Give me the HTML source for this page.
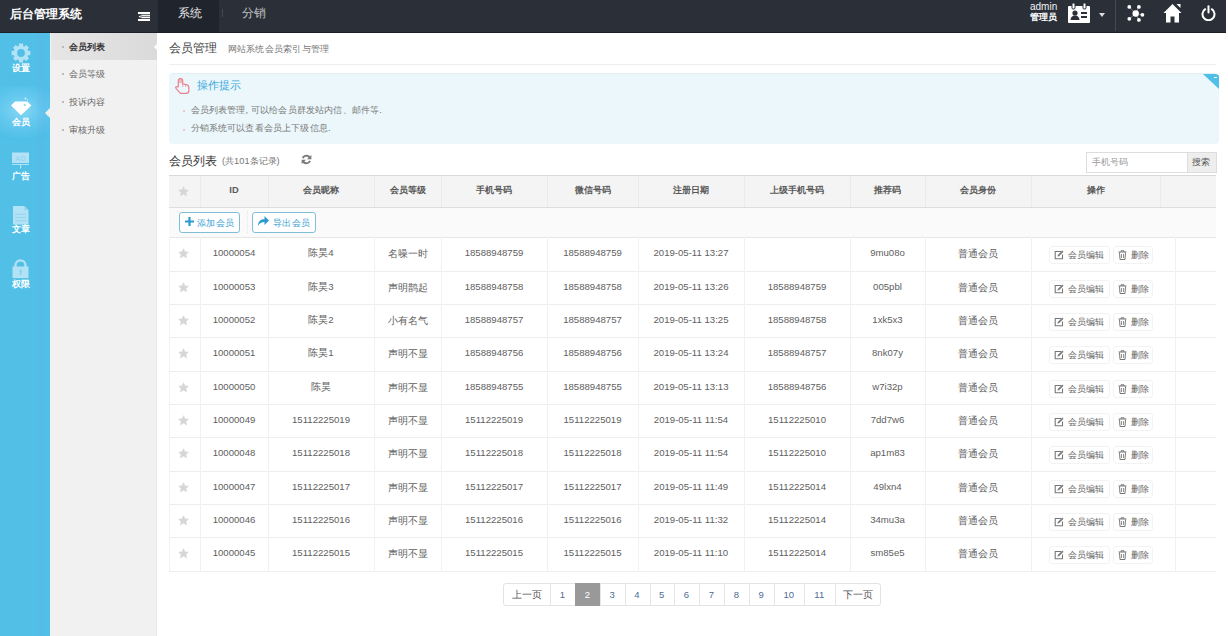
<!DOCTYPE html><html><head><meta charset="utf-8"><title>会员管理</title><style>
*{box-sizing:border-box}
html,body{margin:0;padding:0}
body{width:1228px;height:636px;overflow:hidden;background:#fff;position:relative;font-family:"Liberation Sans",sans-serif;color:#555}
.a{position:absolute}
.hdr{left:0;top:0;width:1226px;height:33px;background:#2b3038;border-bottom:1px solid #1c2027}
.side{left:0;top:33px;width:50px;height:603px;background:#52bfe7}
.sub{left:50px;top:33px;width:107px;height:603px;background:#f1f1f1}
.t{white-space:nowrap;line-height:1}
.cell{position:absolute;display:flex;align-items:center;justify-content:center;white-space:nowrap;line-height:12px}
</style></head><body>
<div class="a hdr"></div>
<div class="a t" style="left:10px;top:8px;font-size:12.2px;font-weight:bold;color:#fff">后台管理系统</div>
<svg class="a" style="left:138px;top:12px" width="12" height="9" viewBox="0 0 12 9"><rect x="0" y="0" width="12" height="9" fill="#fff"/><rect x="0" y="2.3" width="12" height="0.8" fill="#2b3038"/><rect x="0" y="6" width="12" height="0.8" fill="#2b3038"/><rect x="3.5" y="4.2" width="8.5" height="0.6" fill="#2b3038"/><rect x="0" y="2.3" width="3.3" height="4.5" fill="#2b3038"/><path d="M2.6 3.2v2.8L0.6 4.6z" fill="#fff"/></svg>
<div class="a" style="left:158px;top:0;width:61px;height:32px;background:#20252d"></div>
<div class="a t" style="left:178px;top:8px;font-size:11.5px;color:#e6e6e6">系统</div>
<div class="a" style="left:222px;top:9px;width:1px;height:8px;background:#444a53"></div>
<div class="a t" style="left:242px;top:8px;font-size:11.5px;color:#c0c0c0">分销</div>
<div class="a t" style="left:1030px;top:2px;font-size:10px;color:#f2f2f2">admin</div>
<div class="a t" style="left:1030px;top:13px;font-size:9px;font-weight:bold;color:#fff">管理员</div>
<svg class="a" style="left:1068px;top:3px" width="22" height="20" viewBox="0 0 22 20"><rect x="0" y="3" width="22" height="17" rx="1" fill="#fff"/><rect x="4" y="0" width="3" height="6" rx="1" fill="#fff" stroke="#2b3038" stroke-width="1"/><rect x="15" y="0" width="3" height="6" rx="1" fill="#fff" stroke="#2b3038" stroke-width="1"/><circle cx="7" cy="10" r="2.6" fill="#2b3038"/><path d="M2.5 17c0-3 2-4.5 4.5-4.5s4.5 1.5 4.5 4.5z" fill="#2b3038"/><rect x="13" y="9" width="6" height="2" fill="#2b3038"/><rect x="13" y="13" width="6" height="2" fill="#2b3038"/></svg>
<svg class="a" style="left:1099px;top:13px" width="6" height="4" viewBox="0 0 6 4"><path d="M0 0h6L3 4z" fill="#ddd"/></svg>
<div class="a" style="left:1115px;top:0;width:1px;height:31px;background:#444a53"></div>
<svg class="a" style="left:1127px;top:4px" width="18" height="19" viewBox="0 0 18 19"><g stroke="#fff" stroke-width=".6" opacity=".6"><line x1="8.7" y1="9.5" x2="2.3" y2="2.9"/><line x1="8.7" y1="9.5" x2="11.9" y2="2.9"/><line x1="8.7" y1="9.5" x2="15.4" y2="10.8"/><line x1="8.7" y1="9.5" x2="11.9" y2="15.9"/><line x1="8.7" y1="9.5" x2="2.3" y2="14.8"/></g><circle cx="8.7" cy="9.5" r="3.2" fill="#fff"/><circle cx="2.3" cy="2.9" r="1.9" fill="#fff"/><circle cx="11.9" cy="2.9" r="1.9" fill="#fff"/><circle cx="15.4" cy="10.8" r="1.9" fill="#fff"/><circle cx="11.9" cy="15.9" r="1.9" fill="#fff"/><circle cx="2.3" cy="14.8" r="1.9" fill="#fff"/></svg>
<svg class="a" style="left:1163px;top:3px" width="19" height="20" viewBox="0 0 19 20"><path d="M9.5 1L0.5 10h2.5v9.5h4.5v-6h4v6h4.5V10h2.5z" fill="#fff"/><path d="M13.5 1h4v4z" fill="#fff"/></svg>
<svg class="a" style="left:1201px;top:5px" width="15" height="16" viewBox="0 0 15 16"><path d="M4.2 4.2A6 6 0 1 0 10.8 4.2" fill="none" stroke="#fff" stroke-width="2" stroke-linecap="round"/><line x1="7.5" y1="1.2" x2="7.5" y2="7.5" stroke="#fff" stroke-width="2" stroke-linecap="round"/></svg>
<div class="a side"></div>
<div class="a" style="left:0;top:86px;width:50px;height:54px;background:radial-gradient(ellipse 40px 30px at 21px 24px,#86d6f3 0%,#64c8ee 50%,#4fbfe7 100%)"></div>
<div class="a" style="left:37px;top:33px;width:9px;height:603px;background:rgba(120,110,255,0.03)"></div>
<div class="a" style="left:50px;top:33px;width:1px;height:603px;background:#dff3fa"></div>
<svg class="a" style="left:11px;top:43px" width="20" height="20" viewBox="0 0 20 20"><path fill="#b2e2f5" fill-rule="evenodd" d="M16.84 7.17 L17.07 7.81 L19.41 8.09 L19.41 11.91 L17.07 12.19 L16.84 12.83 L16.55 13.45 L18.00 15.30 L15.30 18.00 L13.45 16.55 L12.83 16.84 L12.19 17.07 L11.91 19.41 L8.09 19.41 L7.81 17.07 L7.17 16.84 L6.55 16.55 L4.70 18.00 L2.00 15.30 L3.45 13.45 L3.16 12.83 L2.93 12.19 L0.59 11.91 L0.59 8.09 L2.93 7.81 L3.16 7.17 L3.45 6.55 L2.00 4.70 L4.70 2.00 L6.55 3.45 L7.17 3.16 L7.81 2.93 L8.09 0.59 L11.91 0.59 L12.19 2.93 L12.83 3.16 L13.45 3.45 L15.30 2.00 L18.00 4.70 L16.55 6.55Z M6.10 10.00a3.9 3.9 0 1 0 7.8 0a3.9 3.9 0 1 0 -7.8 0z"/></svg>
<div class="a t" style="left:3px;width:36px;text-align:center;top:63.5px;font-size:9.2px;font-weight:bold;color:#fff">设置</div>
<svg class="a" style="left:11px;top:97px" width="21" height="19" viewBox="0 0 21 19"><path d="M4 4.6h12.4l4 3.8L10 18.2 0 8.4z" fill="#fff"/><circle cx="13.8" cy="8" r="1.2" fill="#a8ddf1"/><circle cx="14.5" cy="1.5" r=".9" fill="#d8f2fb"/><circle cx="16.5" cy="2.8" r=".6" fill="#d8f2fb"/></svg>
<div class="a t" style="left:3px;width:36px;text-align:center;top:117.5px;font-size:9.2px;font-weight:bold;color:#fff">会员</div>
<svg class="a" style="left:12px;top:152px" width="18" height="17" viewBox="0 0 18 17"><rect x="0" y="0.5" width="17" height="10.5" fill="#b2e2f5"/><text x="8.5" y="8.8" font-size="7.5" font-family="Liberation Sans" font-weight="bold" text-anchor="middle" fill="#9ad6ee">AD</text><rect x="0" y="12" width="17" height="1" fill="#b2e2f5"/><rect x="8" y="13" width="1.2" height="3.5" fill="#b2e2f5"/></svg>
<div class="a t" style="left:3px;width:36px;text-align:center;top:171.5px;font-size:9.2px;font-weight:bold;color:#fff">广告</div>
<svg class="a" style="left:13px;top:205.5px" width="16" height="19" viewBox="0 0 16 19"><path d="M0 0h11.5l4 4v14.5H0z" fill="#b2e2f5"/><path d="M11.5 0v4h4z" fill="#8fd3ee"/><g fill="#9ad6ee"><rect x="2" y="7.7" width="11" height="1.2"/><rect x="2" y="10.9" width="11" height="1.2"/><rect x="2" y="14" width="11" height="1.2"/></g></svg>
<div class="a t" style="left:3px;width:36px;text-align:center;top:225.0px;font-size:9.2px;font-weight:bold;color:#fff">文章</div>
<svg class="a" style="left:12px;top:259px" width="17" height="20" viewBox="0 0 17 20"><path d="M3.5 8V6.3a5 5 0 0 1 10 0V8" fill="none" stroke="#b2e2f5" stroke-width="2.3"/><rect x="0.5" y="7.5" width="16" height="11.6" fill="#b2e2f5"/><circle cx="8.7" cy="12" r="1.6" fill="#8fd3ee"/><path d="M8 12.5h1.4l.4 3.5H7.6z" fill="#8fd3ee"/></svg>
<div class="a t" style="left:3px;width:36px;text-align:center;top:279.5px;font-size:9.2px;font-weight:bold;color:#fff">权限</div>
<svg class="a" style="left:45px;top:108px" width="5" height="10" viewBox="0 0 5 10"><path d="M5 0v10L0 5z" fill="#f0f0f0"/></svg>
<div class="a sub"></div>
<div class="a" style="left:156px;top:33px;width:1px;height:603px;background:#ebebeb"></div>
<div class="a" style="left:51px;top:33px;width:106px;height:27px;background:linear-gradient(90deg,#e6e6e6,#dadada)"></div>
<svg class="a" style="left:154px;top:43px" width="4" height="8" viewBox="0 0 4 8"><path d="M4 0v8L0 4z" fill="#fff"/></svg>
<div class="a" style="left:62px;top:46.0px;width:2px;height:2px;background:#aaa;border-radius:1px"></div>
<div class="a t" style="left:69px;top:42.6px;font-size:9.3px;color:#222;-webkit-text-stroke:.25px #222">会员列表</div>
<div class="a" style="left:62px;top:73.3px;width:2px;height:2px;background:#aaa;border-radius:1px"></div>
<div class="a t" style="left:69px;top:69.9px;font-size:9.3px;color:#666;">会员等级</div>
<div class="a" style="left:62px;top:101.0px;width:2px;height:2px;background:#aaa;border-radius:1px"></div>
<div class="a t" style="left:69px;top:97.6px;font-size:9.3px;color:#666;">投诉内容</div>
<div class="a" style="left:62px;top:129.0px;width:2px;height:2px;background:#aaa;border-radius:1px"></div>
<div class="a t" style="left:69px;top:125.6px;font-size:9.3px;color:#666;">审核升级</div>
<div class="a t" style="left:169px;top:42px;font-size:12px;color:#444">会员管理</div>
<div class="a t" style="left:227.5px;top:44px;font-size:9.4px;letter-spacing:.25px;color:#777">网站系统会员索引与管理</div>
<div class="a" style="left:169px;top:64px;width:1047px;height:1px;background:#eee"></div>
<div class="a" style="left:169px;top:73px;width:1050px;height:71px;background:#ebf7fb;border-top:1px solid #e0f1f6;border-radius:4px;overflow:hidden"><svg class="a" style="right:0;top:0" width="16" height="15" viewBox="0 0 16 15"><path d="M0 0h16v15z" fill="#4fbfe7"/><rect x="11" y="3" width="3" height="1" fill="#fff"/></svg></div>
<svg class="a" style="left:175px;top:78px" width="15" height="16" viewBox="0 0 15 16"><circle cx="5.5" cy="3" r="2.3" fill="#f5b3bc"/><path d="M3.3 9V2.7A2.2 2.2 0 0 1 7.7 2.7V5.9L11.3 6.6C13.1 7 13.9 8 13.9 9.6V12.4C13.9 14.2 12.7 15.3 11 15.3H6.6C5.7 15.3 5.1 15 4.5 14.3L1 10.3C.3 9.4 1.2 8.2 2.3 8.8Z" fill="none" stroke="#e9828f" stroke-width="1.2" stroke-linejoin="round"/><path d="M7.7 5.9V9M10.6 6.5V9" stroke="#eea3ad" stroke-width=".9"/></svg>
<div class="a t" style="left:197px;top:79.5px;font-size:11px;color:#3ba7dc">操作提示</div>
<div class="a" style="left:182.5px;top:110.0px;width:2px;height:2px;background:#efb5bc;border-radius:1px"></div>
<div class="a t" style="left:190.5px;top:105.7px;font-size:9.3px;letter-spacing:.16px;color:#777">会员列表管理, 可以给会员群发站内信、邮件等.</div>
<div class="a" style="left:182.5px;top:128.7px;width:2px;height:2px;background:#efb5bc;border-radius:1px"></div>
<div class="a t" style="left:190.5px;top:124.4px;font-size:9.3px;letter-spacing:.16px;color:#777">分销系统可以查看会员上下级信息.</div>
<div class="a t" style="left:169px;top:155px;font-size:12px;color:#333">会员列表</div>
<div class="a t" style="left:222px;top:156.5px;font-size:9.3px;color:#777">(共101条记录)</div>
<svg class="a" style="left:301px;top:154px" width="11" height="11" viewBox="0 0 12 12"><path d="M10 4.8A4.3 4.3 0 0 0 2 4.4M2 7.2a4.3 4.3 0 0 0 8 .4" fill="none" stroke="#7a7a7a" stroke-width="2"/><path d="M11.3 1v4.8H6.5z" fill="#7a7a7a"/><path d="M.7 11V6.2h4.8z" fill="#7a7a7a"/></svg>
<div class="a" style="left:1086px;top:152px;width:102px;height:21px;border:1px solid #ddd;background:#fff"></div>
<div class="a t" style="left:1092px;top:157.5px;font-size:9.3px;color:#999">手机号码</div>
<div class="a" style="left:1187px;top:152px;width:30px;height:21px;border:1px solid #ddd;background:#eee"></div>
<div class="a t" style="left:1192px;top:157.5px;font-size:9.3px;color:#555">搜索</div>
<div class="a" style="left:169px;top:175px;width:1047px;height:1px;background:#d9d9d9"></div>
<div class="a" style="left:169px;top:176px;width:1047px;height:31px;background:#f4f4f4"></div>
<div class="a" style="left:169px;top:207px;width:1047px;height:1px;background:#dedede"></div>
<div class="cell" style="left:169.0px;top:176px;width:31.0px;height:31px"><svg style="margin:-1px 0 0 -2px" width="11" height="11" viewBox="0 0 24 24"><path fill="#d6d6d6" stroke="#d6d6d6" stroke-width="1.5" stroke-linejoin="round" d="M12 1.5l3.2 7 7.3.7-5.5 4.9 1.6 7.4L12 17.6l-6.6 3.9L7 14.1 1.5 9.2l7.3-.7z"/></svg></div>
<div class="a" style="left:200.0px;top:176px;width:1px;height:31px;background:#eaeaea"></div>
<div class="cell" style="left:200.0px;top:174.5px;width:68.0px;height:31px;font-size:9.3px;font-weight:bold;color:#595959">ID</div>
<div class="a" style="left:268.0px;top:176px;width:1px;height:31px;background:#eaeaea"></div>
<div class="cell" style="left:268.0px;top:174.5px;width:106.0px;height:31px;font-size:9.3px;font-weight:bold;color:#595959">会员昵称</div>
<div class="a" style="left:374.0px;top:176px;width:1px;height:31px;background:#eaeaea"></div>
<div class="cell" style="left:374.0px;top:174.5px;width:67.0px;height:31px;font-size:9.3px;font-weight:bold;color:#595959">会员等级</div>
<div class="a" style="left:441.0px;top:176px;width:1px;height:31px;background:#eaeaea"></div>
<div class="cell" style="left:441.0px;top:174.5px;width:106.0px;height:31px;font-size:9.3px;font-weight:bold;color:#595959">手机号码</div>
<div class="a" style="left:547.0px;top:176px;width:1px;height:31px;background:#eaeaea"></div>
<div class="cell" style="left:547.0px;top:174.5px;width:91.0px;height:31px;font-size:9.3px;font-weight:bold;color:#595959">微信号码</div>
<div class="a" style="left:638.0px;top:176px;width:1px;height:31px;background:#eaeaea"></div>
<div class="cell" style="left:638.0px;top:174.5px;width:106.0px;height:31px;font-size:9.3px;font-weight:bold;color:#595959">注册日期</div>
<div class="a" style="left:744.0px;top:176px;width:1px;height:31px;background:#eaeaea"></div>
<div class="cell" style="left:744.0px;top:174.5px;width:106.0px;height:31px;font-size:9.3px;font-weight:bold;color:#595959">上级手机号码</div>
<div class="a" style="left:850.0px;top:176px;width:1px;height:31px;background:#eaeaea"></div>
<div class="cell" style="left:850.0px;top:174.5px;width:75.0px;height:31px;font-size:9.3px;font-weight:bold;color:#595959">推荐码</div>
<div class="a" style="left:925.0px;top:176px;width:1px;height:31px;background:#eaeaea"></div>
<div class="cell" style="left:925.0px;top:174.5px;width:106.0px;height:31px;font-size:9.3px;font-weight:bold;color:#595959">会员身份</div>
<div class="a" style="left:1031.0px;top:176px;width:1px;height:31px;background:#eaeaea"></div>
<div class="cell" style="left:1031.0px;top:174.5px;width:129.0px;height:31px;font-size:9.3px;font-weight:bold;color:#595959">操作</div>
<div class="a" style="left:1160.0px;top:176px;width:1px;height:31px;background:#eaeaea"></div>
<div class="cell" style="left:1160.0px;top:174.5px;width:56.0px;height:31px;font-size:9.3px;font-weight:bold;color:#595959"></div>
<div class="a" style="left:169px;top:208px;width:1047px;height:29px;background:#fafafa"></div>
<div class="a" style="left:169px;top:237px;width:1047px;height:1px;background:#e6e6e6"></div>
<div class="a" style="left:179px;top:212px;width:61px;height:21px;border:1px solid #80bdd8;border-radius:3px;background:#fff"></div>
<svg class="a" style="left:185px;top:217px" width="9" height="9" viewBox="0 0 9 9"><path d="M3.4 0h2.2v3.4H9v2.2H5.6V9H3.4V5.6H0V3.4h3.4z" fill="#2c9ad1"/></svg>
<div class="a t" style="left:197px;top:219px;font-size:9.3px;letter-spacing:.3px;color:#3aa0d5">添加会员</div>
<div class="a" style="left:246.5px;top:211px;width:1px;height:22px;border-left:1px dotted #e6e6e6"></div>
<div class="a" style="left:252px;top:212px;width:64px;height:21px;border:1px solid #80bdd8;border-radius:3px;background:#fff"></div>
<svg class="a" style="left:258px;top:216px" width="11" height="10" viewBox="0 0 11 10"><path d="M0 10C0 5 3 3.3 6.5 3.3V0L11 4.5 6.5 9V6C3.5 6 1.5 7 0 10z" fill="#2c9ad1"/></svg>
<div class="a t" style="left:273px;top:219px;font-size:9.3px;letter-spacing:.3px;color:#3aa0d5">导出会员</div>
<div class="a" style="left:169px;top:271.0px;width:1047px;height:1px;background:#eeeeee"></div>
<div class="a" style="left:169.0px;top:237.0px;width:1px;height:34.0px;background:#f1f1f1"></div>
<div class="cell" style="left:169.0px;top:237.0px;width:31.0px;height:34.0px"><svg style="margin:-1px 0 0 -2px" width="11" height="11" viewBox="0 0 24 24"><path fill="#d6d6d6" stroke="#d6d6d6" stroke-width="1.5" stroke-linejoin="round" d="M12 1.5l3.2 7 7.3.7-5.5 4.9 1.6 7.4L12 17.6l-6.6 3.9L7 14.1 1.5 9.2l7.3-.7z"/></svg></div>
<div class="a" style="left:200.0px;top:237.0px;width:1px;height:34.0px;background:#f1f1f1"></div>
<div class="cell" style="left:200.0px;top:236.3px;width:68.0px;height:34.0px;font-size:9.6px;color:#606060">10000054</div>
<div class="a" style="left:268.0px;top:237.0px;width:1px;height:34.0px;background:#f1f1f1"></div>
<div class="cell" style="left:268.0px;top:236.3px;width:106.0px;height:34.0px;font-size:9.6px;color:#606060">陈昊4</div>
<div class="a" style="left:374.0px;top:237.0px;width:1px;height:34.0px;background:#f1f1f1"></div>
<div class="cell" style="left:374.0px;top:237.1px;width:67.0px;height:34.0px;font-size:9.6px;color:#606060">名噪一时</div>
<div class="a" style="left:441.0px;top:237.0px;width:1px;height:34.0px;background:#f1f1f1"></div>
<div class="cell" style="left:441.0px;top:236.3px;width:106.0px;height:34.0px;font-size:9.6px;color:#606060">18588948759</div>
<div class="a" style="left:547.0px;top:237.0px;width:1px;height:34.0px;background:#f1f1f1"></div>
<div class="cell" style="left:547.0px;top:236.3px;width:91.0px;height:34.0px;font-size:9.6px;color:#606060">18588948759</div>
<div class="a" style="left:638.0px;top:237.0px;width:1px;height:34.0px;background:#f1f1f1"></div>
<div class="cell" style="left:638.0px;top:236.3px;width:106.0px;height:34.0px;font-size:9.6px;color:#606060">2019-05-11 13:27</div>
<div class="a" style="left:744.0px;top:237.0px;width:1px;height:34.0px;background:#f1f1f1"></div>
<div class="cell" style="left:744.0px;top:236.3px;width:106.0px;height:34.0px;font-size:9.6px;color:#606060"></div>
<div class="a" style="left:850.0px;top:237.0px;width:1px;height:34.0px;background:#f1f1f1"></div>
<div class="cell" style="left:850.0px;top:236.3px;width:75.0px;height:34.0px;font-size:9.6px;color:#606060">9mu08o</div>
<div class="a" style="left:925.0px;top:237.0px;width:1px;height:34.0px;background:#f1f1f1"></div>
<div class="cell" style="left:925.0px;top:237.3px;width:106.0px;height:34.0px;font-size:9.6px;color:#606060">普通会员</div>
<div class="a" style="left:1031.0px;top:237.0px;width:1px;height:34.0px;background:#f1f1f1"></div>
<div class="a" style="left:1048.5px;top:246.0px;width:61px;height:18px;border:1px solid #f3f3f3;border-radius:3px;background:#fff"></div>
<svg class="a" style="left:1054px;top:250.0px" width="10" height="10" viewBox="0 0 10 10"><path d="M7 1.5H1.2v7.3h7.3V4.5" fill="none" stroke="#777" stroke-width="1.1"/><path d="M8.3 0.5l1.2 1.2L5 6.2 3.5 6.5l.3-1.5z" fill="#777"/></svg>
<div class="a t" style="left:1067.5px;top:250.5px;font-size:9.3px;letter-spacing:.3px;color:#666">会员编辑</div>
<div class="a" style="left:1113px;top:246.0px;width:40px;height:18px;border:1px solid #f3f3f3;border-radius:3px;background:#fff"></div>
<svg class="a" style="left:1118px;top:250.0px" width="9" height="10" viewBox="0 0 9 10"><path d="M0.5 2h8M3 2V.8h3V2M1.5 2.5l.5 7h5l.5-7" fill="none" stroke="#777" stroke-width="1"/><path d="M3.5 4v4M5.5 4v4" stroke="#777" stroke-width=".8"/></svg>
<div class="a t" style="left:1130.5px;top:250.5px;font-size:9.3px;letter-spacing:.3px;color:#666">删除</div>
<div class="a" style="left:1175.0px;top:237.0px;width:1px;height:34.0px;background:#f1f1f1"></div>
<div class="a" style="left:169px;top:304.0px;width:1047px;height:1px;background:#eeeeee"></div>
<div class="a" style="left:169.0px;top:271.0px;width:1px;height:33.0px;background:#f1f1f1"></div>
<div class="cell" style="left:169.0px;top:271.0px;width:31.0px;height:33.0px"><svg style="margin:-1px 0 0 -2px" width="11" height="11" viewBox="0 0 24 24"><path fill="#d6d6d6" stroke="#d6d6d6" stroke-width="1.5" stroke-linejoin="round" d="M12 1.5l3.2 7 7.3.7-5.5 4.9 1.6 7.4L12 17.6l-6.6 3.9L7 14.1 1.5 9.2l7.3-.7z"/></svg></div>
<div class="a" style="left:200.0px;top:271.0px;width:1px;height:33.0px;background:#f1f1f1"></div>
<div class="cell" style="left:200.0px;top:270.3px;width:68.0px;height:33.0px;font-size:9.6px;color:#606060">10000053</div>
<div class="a" style="left:268.0px;top:271.0px;width:1px;height:33.0px;background:#f1f1f1"></div>
<div class="cell" style="left:268.0px;top:270.3px;width:106.0px;height:33.0px;font-size:9.6px;color:#606060">陈昊3</div>
<div class="a" style="left:374.0px;top:271.0px;width:1px;height:33.0px;background:#f1f1f1"></div>
<div class="cell" style="left:374.0px;top:271.1px;width:67.0px;height:33.0px;font-size:9.6px;color:#606060">声明鹊起</div>
<div class="a" style="left:441.0px;top:271.0px;width:1px;height:33.0px;background:#f1f1f1"></div>
<div class="cell" style="left:441.0px;top:270.3px;width:106.0px;height:33.0px;font-size:9.6px;color:#606060">18588948758</div>
<div class="a" style="left:547.0px;top:271.0px;width:1px;height:33.0px;background:#f1f1f1"></div>
<div class="cell" style="left:547.0px;top:270.3px;width:91.0px;height:33.0px;font-size:9.6px;color:#606060">18588948758</div>
<div class="a" style="left:638.0px;top:271.0px;width:1px;height:33.0px;background:#f1f1f1"></div>
<div class="cell" style="left:638.0px;top:270.3px;width:106.0px;height:33.0px;font-size:9.6px;color:#606060">2019-05-11 13:26</div>
<div class="a" style="left:744.0px;top:271.0px;width:1px;height:33.0px;background:#f1f1f1"></div>
<div class="cell" style="left:744.0px;top:270.3px;width:106.0px;height:33.0px;font-size:9.6px;color:#606060">18588948759</div>
<div class="a" style="left:850.0px;top:271.0px;width:1px;height:33.0px;background:#f1f1f1"></div>
<div class="cell" style="left:850.0px;top:270.3px;width:75.0px;height:33.0px;font-size:9.6px;color:#606060">005pbl</div>
<div class="a" style="left:925.0px;top:271.0px;width:1px;height:33.0px;background:#f1f1f1"></div>
<div class="cell" style="left:925.0px;top:271.3px;width:106.0px;height:33.0px;font-size:9.6px;color:#606060">普通会员</div>
<div class="a" style="left:1031.0px;top:271.0px;width:1px;height:33.0px;background:#f1f1f1"></div>
<div class="a" style="left:1048.5px;top:280.0px;width:61px;height:18px;border:1px solid #f3f3f3;border-radius:3px;background:#fff"></div>
<svg class="a" style="left:1054px;top:284.0px" width="10" height="10" viewBox="0 0 10 10"><path d="M7 1.5H1.2v7.3h7.3V4.5" fill="none" stroke="#777" stroke-width="1.1"/><path d="M8.3 0.5l1.2 1.2L5 6.2 3.5 6.5l.3-1.5z" fill="#777"/></svg>
<div class="a t" style="left:1067.5px;top:284.5px;font-size:9.3px;letter-spacing:.3px;color:#666">会员编辑</div>
<div class="a" style="left:1113px;top:280.0px;width:40px;height:18px;border:1px solid #f3f3f3;border-radius:3px;background:#fff"></div>
<svg class="a" style="left:1118px;top:284.0px" width="9" height="10" viewBox="0 0 9 10"><path d="M0.5 2h8M3 2V.8h3V2M1.5 2.5l.5 7h5l.5-7" fill="none" stroke="#777" stroke-width="1"/><path d="M3.5 4v4M5.5 4v4" stroke="#777" stroke-width=".8"/></svg>
<div class="a t" style="left:1130.5px;top:284.5px;font-size:9.3px;letter-spacing:.3px;color:#666">删除</div>
<div class="a" style="left:1175.0px;top:271.0px;width:1px;height:33.0px;background:#f1f1f1"></div>
<div class="a" style="left:169px;top:337.0px;width:1047px;height:1px;background:#eeeeee"></div>
<div class="a" style="left:169.0px;top:304.0px;width:1px;height:33.0px;background:#f1f1f1"></div>
<div class="cell" style="left:169.0px;top:304.0px;width:31.0px;height:33.0px"><svg style="margin:-1px 0 0 -2px" width="11" height="11" viewBox="0 0 24 24"><path fill="#d6d6d6" stroke="#d6d6d6" stroke-width="1.5" stroke-linejoin="round" d="M12 1.5l3.2 7 7.3.7-5.5 4.9 1.6 7.4L12 17.6l-6.6 3.9L7 14.1 1.5 9.2l7.3-.7z"/></svg></div>
<div class="a" style="left:200.0px;top:304.0px;width:1px;height:33.0px;background:#f1f1f1"></div>
<div class="cell" style="left:200.0px;top:303.3px;width:68.0px;height:33.0px;font-size:9.6px;color:#606060">10000052</div>
<div class="a" style="left:268.0px;top:304.0px;width:1px;height:33.0px;background:#f1f1f1"></div>
<div class="cell" style="left:268.0px;top:303.3px;width:106.0px;height:33.0px;font-size:9.6px;color:#606060">陈昊2</div>
<div class="a" style="left:374.0px;top:304.0px;width:1px;height:33.0px;background:#f1f1f1"></div>
<div class="cell" style="left:374.0px;top:304.1px;width:67.0px;height:33.0px;font-size:9.6px;color:#606060">小有名气</div>
<div class="a" style="left:441.0px;top:304.0px;width:1px;height:33.0px;background:#f1f1f1"></div>
<div class="cell" style="left:441.0px;top:303.3px;width:106.0px;height:33.0px;font-size:9.6px;color:#606060">18588948757</div>
<div class="a" style="left:547.0px;top:304.0px;width:1px;height:33.0px;background:#f1f1f1"></div>
<div class="cell" style="left:547.0px;top:303.3px;width:91.0px;height:33.0px;font-size:9.6px;color:#606060">18588948757</div>
<div class="a" style="left:638.0px;top:304.0px;width:1px;height:33.0px;background:#f1f1f1"></div>
<div class="cell" style="left:638.0px;top:303.3px;width:106.0px;height:33.0px;font-size:9.6px;color:#606060">2019-05-11 13:25</div>
<div class="a" style="left:744.0px;top:304.0px;width:1px;height:33.0px;background:#f1f1f1"></div>
<div class="cell" style="left:744.0px;top:303.3px;width:106.0px;height:33.0px;font-size:9.6px;color:#606060">18588948758</div>
<div class="a" style="left:850.0px;top:304.0px;width:1px;height:33.0px;background:#f1f1f1"></div>
<div class="cell" style="left:850.0px;top:303.3px;width:75.0px;height:33.0px;font-size:9.6px;color:#606060">1xk5x3</div>
<div class="a" style="left:925.0px;top:304.0px;width:1px;height:33.0px;background:#f1f1f1"></div>
<div class="cell" style="left:925.0px;top:304.3px;width:106.0px;height:33.0px;font-size:9.6px;color:#606060">普通会员</div>
<div class="a" style="left:1031.0px;top:304.0px;width:1px;height:33.0px;background:#f1f1f1"></div>
<div class="a" style="left:1048.5px;top:313.0px;width:61px;height:18px;border:1px solid #f3f3f3;border-radius:3px;background:#fff"></div>
<svg class="a" style="left:1054px;top:317.0px" width="10" height="10" viewBox="0 0 10 10"><path d="M7 1.5H1.2v7.3h7.3V4.5" fill="none" stroke="#777" stroke-width="1.1"/><path d="M8.3 0.5l1.2 1.2L5 6.2 3.5 6.5l.3-1.5z" fill="#777"/></svg>
<div class="a t" style="left:1067.5px;top:317.5px;font-size:9.3px;letter-spacing:.3px;color:#666">会员编辑</div>
<div class="a" style="left:1113px;top:313.0px;width:40px;height:18px;border:1px solid #f3f3f3;border-radius:3px;background:#fff"></div>
<svg class="a" style="left:1118px;top:317.0px" width="9" height="10" viewBox="0 0 9 10"><path d="M0.5 2h8M3 2V.8h3V2M1.5 2.5l.5 7h5l.5-7" fill="none" stroke="#777" stroke-width="1"/><path d="M3.5 4v4M5.5 4v4" stroke="#777" stroke-width=".8"/></svg>
<div class="a t" style="left:1130.5px;top:317.5px;font-size:9.3px;letter-spacing:.3px;color:#666">删除</div>
<div class="a" style="left:1175.0px;top:304.0px;width:1px;height:33.0px;background:#f1f1f1"></div>
<div class="a" style="left:169px;top:371.0px;width:1047px;height:1px;background:#eeeeee"></div>
<div class="a" style="left:169.0px;top:337.0px;width:1px;height:34.0px;background:#f1f1f1"></div>
<div class="cell" style="left:169.0px;top:337.0px;width:31.0px;height:34.0px"><svg style="margin:-1px 0 0 -2px" width="11" height="11" viewBox="0 0 24 24"><path fill="#d6d6d6" stroke="#d6d6d6" stroke-width="1.5" stroke-linejoin="round" d="M12 1.5l3.2 7 7.3.7-5.5 4.9 1.6 7.4L12 17.6l-6.6 3.9L7 14.1 1.5 9.2l7.3-.7z"/></svg></div>
<div class="a" style="left:200.0px;top:337.0px;width:1px;height:34.0px;background:#f1f1f1"></div>
<div class="cell" style="left:200.0px;top:336.3px;width:68.0px;height:34.0px;font-size:9.6px;color:#606060">10000051</div>
<div class="a" style="left:268.0px;top:337.0px;width:1px;height:34.0px;background:#f1f1f1"></div>
<div class="cell" style="left:268.0px;top:336.3px;width:106.0px;height:34.0px;font-size:9.6px;color:#606060">陈昊1</div>
<div class="a" style="left:374.0px;top:337.0px;width:1px;height:34.0px;background:#f1f1f1"></div>
<div class="cell" style="left:374.0px;top:337.1px;width:67.0px;height:34.0px;font-size:9.6px;color:#606060">声明不显</div>
<div class="a" style="left:441.0px;top:337.0px;width:1px;height:34.0px;background:#f1f1f1"></div>
<div class="cell" style="left:441.0px;top:336.3px;width:106.0px;height:34.0px;font-size:9.6px;color:#606060">18588948756</div>
<div class="a" style="left:547.0px;top:337.0px;width:1px;height:34.0px;background:#f1f1f1"></div>
<div class="cell" style="left:547.0px;top:336.3px;width:91.0px;height:34.0px;font-size:9.6px;color:#606060">18588948756</div>
<div class="a" style="left:638.0px;top:337.0px;width:1px;height:34.0px;background:#f1f1f1"></div>
<div class="cell" style="left:638.0px;top:336.3px;width:106.0px;height:34.0px;font-size:9.6px;color:#606060">2019-05-11 13:24</div>
<div class="a" style="left:744.0px;top:337.0px;width:1px;height:34.0px;background:#f1f1f1"></div>
<div class="cell" style="left:744.0px;top:336.3px;width:106.0px;height:34.0px;font-size:9.6px;color:#606060">18588948757</div>
<div class="a" style="left:850.0px;top:337.0px;width:1px;height:34.0px;background:#f1f1f1"></div>
<div class="cell" style="left:850.0px;top:336.3px;width:75.0px;height:34.0px;font-size:9.6px;color:#606060">8nk07y</div>
<div class="a" style="left:925.0px;top:337.0px;width:1px;height:34.0px;background:#f1f1f1"></div>
<div class="cell" style="left:925.0px;top:337.3px;width:106.0px;height:34.0px;font-size:9.6px;color:#606060">普通会员</div>
<div class="a" style="left:1031.0px;top:337.0px;width:1px;height:34.0px;background:#f1f1f1"></div>
<div class="a" style="left:1048.5px;top:346.0px;width:61px;height:18px;border:1px solid #f3f3f3;border-radius:3px;background:#fff"></div>
<svg class="a" style="left:1054px;top:350.0px" width="10" height="10" viewBox="0 0 10 10"><path d="M7 1.5H1.2v7.3h7.3V4.5" fill="none" stroke="#777" stroke-width="1.1"/><path d="M8.3 0.5l1.2 1.2L5 6.2 3.5 6.5l.3-1.5z" fill="#777"/></svg>
<div class="a t" style="left:1067.5px;top:350.5px;font-size:9.3px;letter-spacing:.3px;color:#666">会员编辑</div>
<div class="a" style="left:1113px;top:346.0px;width:40px;height:18px;border:1px solid #f3f3f3;border-radius:3px;background:#fff"></div>
<svg class="a" style="left:1118px;top:350.0px" width="9" height="10" viewBox="0 0 9 10"><path d="M0.5 2h8M3 2V.8h3V2M1.5 2.5l.5 7h5l.5-7" fill="none" stroke="#777" stroke-width="1"/><path d="M3.5 4v4M5.5 4v4" stroke="#777" stroke-width=".8"/></svg>
<div class="a t" style="left:1130.5px;top:350.5px;font-size:9.3px;letter-spacing:.3px;color:#666">删除</div>
<div class="a" style="left:1175.0px;top:337.0px;width:1px;height:34.0px;background:#f1f1f1"></div>
<div class="a" style="left:169px;top:404.0px;width:1047px;height:1px;background:#eeeeee"></div>
<div class="a" style="left:169.0px;top:371.0px;width:1px;height:33.0px;background:#f1f1f1"></div>
<div class="cell" style="left:169.0px;top:371.0px;width:31.0px;height:33.0px"><svg style="margin:-1px 0 0 -2px" width="11" height="11" viewBox="0 0 24 24"><path fill="#d6d6d6" stroke="#d6d6d6" stroke-width="1.5" stroke-linejoin="round" d="M12 1.5l3.2 7 7.3.7-5.5 4.9 1.6 7.4L12 17.6l-6.6 3.9L7 14.1 1.5 9.2l7.3-.7z"/></svg></div>
<div class="a" style="left:200.0px;top:371.0px;width:1px;height:33.0px;background:#f1f1f1"></div>
<div class="cell" style="left:200.0px;top:370.3px;width:68.0px;height:33.0px;font-size:9.6px;color:#606060">10000050</div>
<div class="a" style="left:268.0px;top:371.0px;width:1px;height:33.0px;background:#f1f1f1"></div>
<div class="cell" style="left:268.0px;top:370.3px;width:106.0px;height:33.0px;font-size:9.6px;color:#606060">陈昊</div>
<div class="a" style="left:374.0px;top:371.0px;width:1px;height:33.0px;background:#f1f1f1"></div>
<div class="cell" style="left:374.0px;top:371.1px;width:67.0px;height:33.0px;font-size:9.6px;color:#606060">声明不显</div>
<div class="a" style="left:441.0px;top:371.0px;width:1px;height:33.0px;background:#f1f1f1"></div>
<div class="cell" style="left:441.0px;top:370.3px;width:106.0px;height:33.0px;font-size:9.6px;color:#606060">18588948755</div>
<div class="a" style="left:547.0px;top:371.0px;width:1px;height:33.0px;background:#f1f1f1"></div>
<div class="cell" style="left:547.0px;top:370.3px;width:91.0px;height:33.0px;font-size:9.6px;color:#606060">18588948755</div>
<div class="a" style="left:638.0px;top:371.0px;width:1px;height:33.0px;background:#f1f1f1"></div>
<div class="cell" style="left:638.0px;top:370.3px;width:106.0px;height:33.0px;font-size:9.6px;color:#606060">2019-05-11 13:13</div>
<div class="a" style="left:744.0px;top:371.0px;width:1px;height:33.0px;background:#f1f1f1"></div>
<div class="cell" style="left:744.0px;top:370.3px;width:106.0px;height:33.0px;font-size:9.6px;color:#606060">18588948756</div>
<div class="a" style="left:850.0px;top:371.0px;width:1px;height:33.0px;background:#f1f1f1"></div>
<div class="cell" style="left:850.0px;top:370.3px;width:75.0px;height:33.0px;font-size:9.6px;color:#606060">w7i32p</div>
<div class="a" style="left:925.0px;top:371.0px;width:1px;height:33.0px;background:#f1f1f1"></div>
<div class="cell" style="left:925.0px;top:371.3px;width:106.0px;height:33.0px;font-size:9.6px;color:#606060">普通会员</div>
<div class="a" style="left:1031.0px;top:371.0px;width:1px;height:33.0px;background:#f1f1f1"></div>
<div class="a" style="left:1048.5px;top:380.0px;width:61px;height:18px;border:1px solid #f3f3f3;border-radius:3px;background:#fff"></div>
<svg class="a" style="left:1054px;top:384.0px" width="10" height="10" viewBox="0 0 10 10"><path d="M7 1.5H1.2v7.3h7.3V4.5" fill="none" stroke="#777" stroke-width="1.1"/><path d="M8.3 0.5l1.2 1.2L5 6.2 3.5 6.5l.3-1.5z" fill="#777"/></svg>
<div class="a t" style="left:1067.5px;top:384.5px;font-size:9.3px;letter-spacing:.3px;color:#666">会员编辑</div>
<div class="a" style="left:1113px;top:380.0px;width:40px;height:18px;border:1px solid #f3f3f3;border-radius:3px;background:#fff"></div>
<svg class="a" style="left:1118px;top:384.0px" width="9" height="10" viewBox="0 0 9 10"><path d="M0.5 2h8M3 2V.8h3V2M1.5 2.5l.5 7h5l.5-7" fill="none" stroke="#777" stroke-width="1"/><path d="M3.5 4v4M5.5 4v4" stroke="#777" stroke-width=".8"/></svg>
<div class="a t" style="left:1130.5px;top:384.5px;font-size:9.3px;letter-spacing:.3px;color:#666">删除</div>
<div class="a" style="left:1175.0px;top:371.0px;width:1px;height:33.0px;background:#f1f1f1"></div>
<div class="a" style="left:169px;top:437.0px;width:1047px;height:1px;background:#eeeeee"></div>
<div class="a" style="left:169.0px;top:404.0px;width:1px;height:33.0px;background:#f1f1f1"></div>
<div class="cell" style="left:169.0px;top:404.0px;width:31.0px;height:33.0px"><svg style="margin:-1px 0 0 -2px" width="11" height="11" viewBox="0 0 24 24"><path fill="#d6d6d6" stroke="#d6d6d6" stroke-width="1.5" stroke-linejoin="round" d="M12 1.5l3.2 7 7.3.7-5.5 4.9 1.6 7.4L12 17.6l-6.6 3.9L7 14.1 1.5 9.2l7.3-.7z"/></svg></div>
<div class="a" style="left:200.0px;top:404.0px;width:1px;height:33.0px;background:#f1f1f1"></div>
<div class="cell" style="left:200.0px;top:403.3px;width:68.0px;height:33.0px;font-size:9.6px;color:#606060">10000049</div>
<div class="a" style="left:268.0px;top:404.0px;width:1px;height:33.0px;background:#f1f1f1"></div>
<div class="cell" style="left:268.0px;top:403.3px;width:106.0px;height:33.0px;font-size:9.6px;color:#606060">15112225019</div>
<div class="a" style="left:374.0px;top:404.0px;width:1px;height:33.0px;background:#f1f1f1"></div>
<div class="cell" style="left:374.0px;top:404.1px;width:67.0px;height:33.0px;font-size:9.6px;color:#606060">声明不显</div>
<div class="a" style="left:441.0px;top:404.0px;width:1px;height:33.0px;background:#f1f1f1"></div>
<div class="cell" style="left:441.0px;top:403.3px;width:106.0px;height:33.0px;font-size:9.6px;color:#606060">15112225019</div>
<div class="a" style="left:547.0px;top:404.0px;width:1px;height:33.0px;background:#f1f1f1"></div>
<div class="cell" style="left:547.0px;top:403.3px;width:91.0px;height:33.0px;font-size:9.6px;color:#606060">15112225019</div>
<div class="a" style="left:638.0px;top:404.0px;width:1px;height:33.0px;background:#f1f1f1"></div>
<div class="cell" style="left:638.0px;top:403.3px;width:106.0px;height:33.0px;font-size:9.6px;color:#606060">2019-05-11 11:54</div>
<div class="a" style="left:744.0px;top:404.0px;width:1px;height:33.0px;background:#f1f1f1"></div>
<div class="cell" style="left:744.0px;top:403.3px;width:106.0px;height:33.0px;font-size:9.6px;color:#606060">15112225010</div>
<div class="a" style="left:850.0px;top:404.0px;width:1px;height:33.0px;background:#f1f1f1"></div>
<div class="cell" style="left:850.0px;top:403.3px;width:75.0px;height:33.0px;font-size:9.6px;color:#606060">7dd7w6</div>
<div class="a" style="left:925.0px;top:404.0px;width:1px;height:33.0px;background:#f1f1f1"></div>
<div class="cell" style="left:925.0px;top:404.3px;width:106.0px;height:33.0px;font-size:9.6px;color:#606060">普通会员</div>
<div class="a" style="left:1031.0px;top:404.0px;width:1px;height:33.0px;background:#f1f1f1"></div>
<div class="a" style="left:1048.5px;top:413.0px;width:61px;height:18px;border:1px solid #f3f3f3;border-radius:3px;background:#fff"></div>
<svg class="a" style="left:1054px;top:417.0px" width="10" height="10" viewBox="0 0 10 10"><path d="M7 1.5H1.2v7.3h7.3V4.5" fill="none" stroke="#777" stroke-width="1.1"/><path d="M8.3 0.5l1.2 1.2L5 6.2 3.5 6.5l.3-1.5z" fill="#777"/></svg>
<div class="a t" style="left:1067.5px;top:417.5px;font-size:9.3px;letter-spacing:.3px;color:#666">会员编辑</div>
<div class="a" style="left:1113px;top:413.0px;width:40px;height:18px;border:1px solid #f3f3f3;border-radius:3px;background:#fff"></div>
<svg class="a" style="left:1118px;top:417.0px" width="9" height="10" viewBox="0 0 9 10"><path d="M0.5 2h8M3 2V.8h3V2M1.5 2.5l.5 7h5l.5-7" fill="none" stroke="#777" stroke-width="1"/><path d="M3.5 4v4M5.5 4v4" stroke="#777" stroke-width=".8"/></svg>
<div class="a t" style="left:1130.5px;top:417.5px;font-size:9.3px;letter-spacing:.3px;color:#666">删除</div>
<div class="a" style="left:1175.0px;top:404.0px;width:1px;height:33.0px;background:#f1f1f1"></div>
<div class="a" style="left:169px;top:471.0px;width:1047px;height:1px;background:#eeeeee"></div>
<div class="a" style="left:169.0px;top:437.0px;width:1px;height:34.0px;background:#f1f1f1"></div>
<div class="cell" style="left:169.0px;top:437.0px;width:31.0px;height:34.0px"><svg style="margin:-1px 0 0 -2px" width="11" height="11" viewBox="0 0 24 24"><path fill="#d6d6d6" stroke="#d6d6d6" stroke-width="1.5" stroke-linejoin="round" d="M12 1.5l3.2 7 7.3.7-5.5 4.9 1.6 7.4L12 17.6l-6.6 3.9L7 14.1 1.5 9.2l7.3-.7z"/></svg></div>
<div class="a" style="left:200.0px;top:437.0px;width:1px;height:34.0px;background:#f1f1f1"></div>
<div class="cell" style="left:200.0px;top:436.3px;width:68.0px;height:34.0px;font-size:9.6px;color:#606060">10000048</div>
<div class="a" style="left:268.0px;top:437.0px;width:1px;height:34.0px;background:#f1f1f1"></div>
<div class="cell" style="left:268.0px;top:436.3px;width:106.0px;height:34.0px;font-size:9.6px;color:#606060">15112225018</div>
<div class="a" style="left:374.0px;top:437.0px;width:1px;height:34.0px;background:#f1f1f1"></div>
<div class="cell" style="left:374.0px;top:437.1px;width:67.0px;height:34.0px;font-size:9.6px;color:#606060">声明不显</div>
<div class="a" style="left:441.0px;top:437.0px;width:1px;height:34.0px;background:#f1f1f1"></div>
<div class="cell" style="left:441.0px;top:436.3px;width:106.0px;height:34.0px;font-size:9.6px;color:#606060">15112225018</div>
<div class="a" style="left:547.0px;top:437.0px;width:1px;height:34.0px;background:#f1f1f1"></div>
<div class="cell" style="left:547.0px;top:436.3px;width:91.0px;height:34.0px;font-size:9.6px;color:#606060">15112225018</div>
<div class="a" style="left:638.0px;top:437.0px;width:1px;height:34.0px;background:#f1f1f1"></div>
<div class="cell" style="left:638.0px;top:436.3px;width:106.0px;height:34.0px;font-size:9.6px;color:#606060">2019-05-11 11:54</div>
<div class="a" style="left:744.0px;top:437.0px;width:1px;height:34.0px;background:#f1f1f1"></div>
<div class="cell" style="left:744.0px;top:436.3px;width:106.0px;height:34.0px;font-size:9.6px;color:#606060">15112225010</div>
<div class="a" style="left:850.0px;top:437.0px;width:1px;height:34.0px;background:#f1f1f1"></div>
<div class="cell" style="left:850.0px;top:436.3px;width:75.0px;height:34.0px;font-size:9.6px;color:#606060">ap1m83</div>
<div class="a" style="left:925.0px;top:437.0px;width:1px;height:34.0px;background:#f1f1f1"></div>
<div class="cell" style="left:925.0px;top:437.3px;width:106.0px;height:34.0px;font-size:9.6px;color:#606060">普通会员</div>
<div class="a" style="left:1031.0px;top:437.0px;width:1px;height:34.0px;background:#f1f1f1"></div>
<div class="a" style="left:1048.5px;top:446.0px;width:61px;height:18px;border:1px solid #f3f3f3;border-radius:3px;background:#fff"></div>
<svg class="a" style="left:1054px;top:450.0px" width="10" height="10" viewBox="0 0 10 10"><path d="M7 1.5H1.2v7.3h7.3V4.5" fill="none" stroke="#777" stroke-width="1.1"/><path d="M8.3 0.5l1.2 1.2L5 6.2 3.5 6.5l.3-1.5z" fill="#777"/></svg>
<div class="a t" style="left:1067.5px;top:450.5px;font-size:9.3px;letter-spacing:.3px;color:#666">会员编辑</div>
<div class="a" style="left:1113px;top:446.0px;width:40px;height:18px;border:1px solid #f3f3f3;border-radius:3px;background:#fff"></div>
<svg class="a" style="left:1118px;top:450.0px" width="9" height="10" viewBox="0 0 9 10"><path d="M0.5 2h8M3 2V.8h3V2M1.5 2.5l.5 7h5l.5-7" fill="none" stroke="#777" stroke-width="1"/><path d="M3.5 4v4M5.5 4v4" stroke="#777" stroke-width=".8"/></svg>
<div class="a t" style="left:1130.5px;top:450.5px;font-size:9.3px;letter-spacing:.3px;color:#666">删除</div>
<div class="a" style="left:1175.0px;top:437.0px;width:1px;height:34.0px;background:#f1f1f1"></div>
<div class="a" style="left:169px;top:504.0px;width:1047px;height:1px;background:#eeeeee"></div>
<div class="a" style="left:169.0px;top:471.0px;width:1px;height:33.0px;background:#f1f1f1"></div>
<div class="cell" style="left:169.0px;top:471.0px;width:31.0px;height:33.0px"><svg style="margin:-1px 0 0 -2px" width="11" height="11" viewBox="0 0 24 24"><path fill="#d6d6d6" stroke="#d6d6d6" stroke-width="1.5" stroke-linejoin="round" d="M12 1.5l3.2 7 7.3.7-5.5 4.9 1.6 7.4L12 17.6l-6.6 3.9L7 14.1 1.5 9.2l7.3-.7z"/></svg></div>
<div class="a" style="left:200.0px;top:471.0px;width:1px;height:33.0px;background:#f1f1f1"></div>
<div class="cell" style="left:200.0px;top:470.3px;width:68.0px;height:33.0px;font-size:9.6px;color:#606060">10000047</div>
<div class="a" style="left:268.0px;top:471.0px;width:1px;height:33.0px;background:#f1f1f1"></div>
<div class="cell" style="left:268.0px;top:470.3px;width:106.0px;height:33.0px;font-size:9.6px;color:#606060">15112225017</div>
<div class="a" style="left:374.0px;top:471.0px;width:1px;height:33.0px;background:#f1f1f1"></div>
<div class="cell" style="left:374.0px;top:471.1px;width:67.0px;height:33.0px;font-size:9.6px;color:#606060">声明不显</div>
<div class="a" style="left:441.0px;top:471.0px;width:1px;height:33.0px;background:#f1f1f1"></div>
<div class="cell" style="left:441.0px;top:470.3px;width:106.0px;height:33.0px;font-size:9.6px;color:#606060">15112225017</div>
<div class="a" style="left:547.0px;top:471.0px;width:1px;height:33.0px;background:#f1f1f1"></div>
<div class="cell" style="left:547.0px;top:470.3px;width:91.0px;height:33.0px;font-size:9.6px;color:#606060">15112225017</div>
<div class="a" style="left:638.0px;top:471.0px;width:1px;height:33.0px;background:#f1f1f1"></div>
<div class="cell" style="left:638.0px;top:470.3px;width:106.0px;height:33.0px;font-size:9.6px;color:#606060">2019-05-11 11:49</div>
<div class="a" style="left:744.0px;top:471.0px;width:1px;height:33.0px;background:#f1f1f1"></div>
<div class="cell" style="left:744.0px;top:470.3px;width:106.0px;height:33.0px;font-size:9.6px;color:#606060">15112225014</div>
<div class="a" style="left:850.0px;top:471.0px;width:1px;height:33.0px;background:#f1f1f1"></div>
<div class="cell" style="left:850.0px;top:470.3px;width:75.0px;height:33.0px;font-size:9.6px;color:#606060">49lxn4</div>
<div class="a" style="left:925.0px;top:471.0px;width:1px;height:33.0px;background:#f1f1f1"></div>
<div class="cell" style="left:925.0px;top:471.3px;width:106.0px;height:33.0px;font-size:9.6px;color:#606060">普通会员</div>
<div class="a" style="left:1031.0px;top:471.0px;width:1px;height:33.0px;background:#f1f1f1"></div>
<div class="a" style="left:1048.5px;top:480.0px;width:61px;height:18px;border:1px solid #f3f3f3;border-radius:3px;background:#fff"></div>
<svg class="a" style="left:1054px;top:484.0px" width="10" height="10" viewBox="0 0 10 10"><path d="M7 1.5H1.2v7.3h7.3V4.5" fill="none" stroke="#777" stroke-width="1.1"/><path d="M8.3 0.5l1.2 1.2L5 6.2 3.5 6.5l.3-1.5z" fill="#777"/></svg>
<div class="a t" style="left:1067.5px;top:484.5px;font-size:9.3px;letter-spacing:.3px;color:#666">会员编辑</div>
<div class="a" style="left:1113px;top:480.0px;width:40px;height:18px;border:1px solid #f3f3f3;border-radius:3px;background:#fff"></div>
<svg class="a" style="left:1118px;top:484.0px" width="9" height="10" viewBox="0 0 9 10"><path d="M0.5 2h8M3 2V.8h3V2M1.5 2.5l.5 7h5l.5-7" fill="none" stroke="#777" stroke-width="1"/><path d="M3.5 4v4M5.5 4v4" stroke="#777" stroke-width=".8"/></svg>
<div class="a t" style="left:1130.5px;top:484.5px;font-size:9.3px;letter-spacing:.3px;color:#666">删除</div>
<div class="a" style="left:1175.0px;top:471.0px;width:1px;height:33.0px;background:#f1f1f1"></div>
<div class="a" style="left:169px;top:537.0px;width:1047px;height:1px;background:#eeeeee"></div>
<div class="a" style="left:169.0px;top:504.0px;width:1px;height:33.0px;background:#f1f1f1"></div>
<div class="cell" style="left:169.0px;top:504.0px;width:31.0px;height:33.0px"><svg style="margin:-1px 0 0 -2px" width="11" height="11" viewBox="0 0 24 24"><path fill="#d6d6d6" stroke="#d6d6d6" stroke-width="1.5" stroke-linejoin="round" d="M12 1.5l3.2 7 7.3.7-5.5 4.9 1.6 7.4L12 17.6l-6.6 3.9L7 14.1 1.5 9.2l7.3-.7z"/></svg></div>
<div class="a" style="left:200.0px;top:504.0px;width:1px;height:33.0px;background:#f1f1f1"></div>
<div class="cell" style="left:200.0px;top:503.3px;width:68.0px;height:33.0px;font-size:9.6px;color:#606060">10000046</div>
<div class="a" style="left:268.0px;top:504.0px;width:1px;height:33.0px;background:#f1f1f1"></div>
<div class="cell" style="left:268.0px;top:503.3px;width:106.0px;height:33.0px;font-size:9.6px;color:#606060">15112225016</div>
<div class="a" style="left:374.0px;top:504.0px;width:1px;height:33.0px;background:#f1f1f1"></div>
<div class="cell" style="left:374.0px;top:504.1px;width:67.0px;height:33.0px;font-size:9.6px;color:#606060">声明不显</div>
<div class="a" style="left:441.0px;top:504.0px;width:1px;height:33.0px;background:#f1f1f1"></div>
<div class="cell" style="left:441.0px;top:503.3px;width:106.0px;height:33.0px;font-size:9.6px;color:#606060">15112225016</div>
<div class="a" style="left:547.0px;top:504.0px;width:1px;height:33.0px;background:#f1f1f1"></div>
<div class="cell" style="left:547.0px;top:503.3px;width:91.0px;height:33.0px;font-size:9.6px;color:#606060">15112225016</div>
<div class="a" style="left:638.0px;top:504.0px;width:1px;height:33.0px;background:#f1f1f1"></div>
<div class="cell" style="left:638.0px;top:503.3px;width:106.0px;height:33.0px;font-size:9.6px;color:#606060">2019-05-11 11:32</div>
<div class="a" style="left:744.0px;top:504.0px;width:1px;height:33.0px;background:#f1f1f1"></div>
<div class="cell" style="left:744.0px;top:503.3px;width:106.0px;height:33.0px;font-size:9.6px;color:#606060">15112225014</div>
<div class="a" style="left:850.0px;top:504.0px;width:1px;height:33.0px;background:#f1f1f1"></div>
<div class="cell" style="left:850.0px;top:503.3px;width:75.0px;height:33.0px;font-size:9.6px;color:#606060">34mu3a</div>
<div class="a" style="left:925.0px;top:504.0px;width:1px;height:33.0px;background:#f1f1f1"></div>
<div class="cell" style="left:925.0px;top:504.3px;width:106.0px;height:33.0px;font-size:9.6px;color:#606060">普通会员</div>
<div class="a" style="left:1031.0px;top:504.0px;width:1px;height:33.0px;background:#f1f1f1"></div>
<div class="a" style="left:1048.5px;top:513.0px;width:61px;height:18px;border:1px solid #f3f3f3;border-radius:3px;background:#fff"></div>
<svg class="a" style="left:1054px;top:517.0px" width="10" height="10" viewBox="0 0 10 10"><path d="M7 1.5H1.2v7.3h7.3V4.5" fill="none" stroke="#777" stroke-width="1.1"/><path d="M8.3 0.5l1.2 1.2L5 6.2 3.5 6.5l.3-1.5z" fill="#777"/></svg>
<div class="a t" style="left:1067.5px;top:517.5px;font-size:9.3px;letter-spacing:.3px;color:#666">会员编辑</div>
<div class="a" style="left:1113px;top:513.0px;width:40px;height:18px;border:1px solid #f3f3f3;border-radius:3px;background:#fff"></div>
<svg class="a" style="left:1118px;top:517.0px" width="9" height="10" viewBox="0 0 9 10"><path d="M0.5 2h8M3 2V.8h3V2M1.5 2.5l.5 7h5l.5-7" fill="none" stroke="#777" stroke-width="1"/><path d="M3.5 4v4M5.5 4v4" stroke="#777" stroke-width=".8"/></svg>
<div class="a t" style="left:1130.5px;top:517.5px;font-size:9.3px;letter-spacing:.3px;color:#666">删除</div>
<div class="a" style="left:1175.0px;top:504.0px;width:1px;height:33.0px;background:#f1f1f1"></div>
<div class="a" style="left:169px;top:571.0px;width:1047px;height:1px;background:#eeeeee"></div>
<div class="a" style="left:169.0px;top:537.0px;width:1px;height:34.0px;background:#f1f1f1"></div>
<div class="cell" style="left:169.0px;top:537.0px;width:31.0px;height:34.0px"><svg style="margin:-1px 0 0 -2px" width="11" height="11" viewBox="0 0 24 24"><path fill="#d6d6d6" stroke="#d6d6d6" stroke-width="1.5" stroke-linejoin="round" d="M12 1.5l3.2 7 7.3.7-5.5 4.9 1.6 7.4L12 17.6l-6.6 3.9L7 14.1 1.5 9.2l7.3-.7z"/></svg></div>
<div class="a" style="left:200.0px;top:537.0px;width:1px;height:34.0px;background:#f1f1f1"></div>
<div class="cell" style="left:200.0px;top:536.3px;width:68.0px;height:34.0px;font-size:9.6px;color:#606060">10000045</div>
<div class="a" style="left:268.0px;top:537.0px;width:1px;height:34.0px;background:#f1f1f1"></div>
<div class="cell" style="left:268.0px;top:536.3px;width:106.0px;height:34.0px;font-size:9.6px;color:#606060">15112225015</div>
<div class="a" style="left:374.0px;top:537.0px;width:1px;height:34.0px;background:#f1f1f1"></div>
<div class="cell" style="left:374.0px;top:537.1px;width:67.0px;height:34.0px;font-size:9.6px;color:#606060">声明不显</div>
<div class="a" style="left:441.0px;top:537.0px;width:1px;height:34.0px;background:#f1f1f1"></div>
<div class="cell" style="left:441.0px;top:536.3px;width:106.0px;height:34.0px;font-size:9.6px;color:#606060">15112225015</div>
<div class="a" style="left:547.0px;top:537.0px;width:1px;height:34.0px;background:#f1f1f1"></div>
<div class="cell" style="left:547.0px;top:536.3px;width:91.0px;height:34.0px;font-size:9.6px;color:#606060">15112225015</div>
<div class="a" style="left:638.0px;top:537.0px;width:1px;height:34.0px;background:#f1f1f1"></div>
<div class="cell" style="left:638.0px;top:536.3px;width:106.0px;height:34.0px;font-size:9.6px;color:#606060">2019-05-11 11:10</div>
<div class="a" style="left:744.0px;top:537.0px;width:1px;height:34.0px;background:#f1f1f1"></div>
<div class="cell" style="left:744.0px;top:536.3px;width:106.0px;height:34.0px;font-size:9.6px;color:#606060">15112225014</div>
<div class="a" style="left:850.0px;top:537.0px;width:1px;height:34.0px;background:#f1f1f1"></div>
<div class="cell" style="left:850.0px;top:536.3px;width:75.0px;height:34.0px;font-size:9.6px;color:#606060">sm85e5</div>
<div class="a" style="left:925.0px;top:537.0px;width:1px;height:34.0px;background:#f1f1f1"></div>
<div class="cell" style="left:925.0px;top:537.3px;width:106.0px;height:34.0px;font-size:9.6px;color:#606060">普通会员</div>
<div class="a" style="left:1031.0px;top:537.0px;width:1px;height:34.0px;background:#f1f1f1"></div>
<div class="a" style="left:1048.5px;top:546.0px;width:61px;height:18px;border:1px solid #f3f3f3;border-radius:3px;background:#fff"></div>
<svg class="a" style="left:1054px;top:550.0px" width="10" height="10" viewBox="0 0 10 10"><path d="M7 1.5H1.2v7.3h7.3V4.5" fill="none" stroke="#777" stroke-width="1.1"/><path d="M8.3 0.5l1.2 1.2L5 6.2 3.5 6.5l.3-1.5z" fill="#777"/></svg>
<div class="a t" style="left:1067.5px;top:550.5px;font-size:9.3px;letter-spacing:.3px;color:#666">会员编辑</div>
<div class="a" style="left:1113px;top:546.0px;width:40px;height:18px;border:1px solid #f3f3f3;border-radius:3px;background:#fff"></div>
<svg class="a" style="left:1118px;top:550.0px" width="9" height="10" viewBox="0 0 9 10"><path d="M0.5 2h8M3 2V.8h3V2M1.5 2.5l.5 7h5l.5-7" fill="none" stroke="#777" stroke-width="1"/><path d="M3.5 4v4M5.5 4v4" stroke="#777" stroke-width=".8"/></svg>
<div class="a t" style="left:1130.5px;top:550.5px;font-size:9.3px;letter-spacing:.3px;color:#666">删除</div>
<div class="a" style="left:1175.0px;top:537.0px;width:1px;height:34.0px;background:#f1f1f1"></div>
<div class="a" style="left:503px;top:583px;width:378px;height:23px;border:1px solid #e3e3e3;border-radius:3px"></div>
<div class="cell" style="left:503.0px;top:583px;width:47.0px;height:23px;font-size:9.5px;color:#555">上一页</div>
<div class="a" style="left:550.0px;top:583px;width:1px;height:23px;background:#e6e6e6"></div>
<div class="cell" style="left:550.0px;top:583px;width:25.0px;height:23px;font-size:9.5px;color:#506c96">1</div>
<div class="a" style="left:575.0px;top:583px;width:1px;height:23px;background:#e6e6e6"></div>
<div class="a" style="left:575.0px;top:583px;width:25.0px;height:23px;background:#999"></div>
<div class="cell" style="left:575.0px;top:583px;width:25.0px;height:23px;font-size:9.5px;color:#fff">2</div>
<div class="a" style="left:600.0px;top:583px;width:1px;height:23px;background:#e6e6e6"></div>
<div class="cell" style="left:600.0px;top:583px;width:24.5px;height:23px;font-size:9.5px;color:#506c96">3</div>
<div class="a" style="left:624.5px;top:583px;width:1px;height:23px;background:#e6e6e6"></div>
<div class="cell" style="left:624.5px;top:583px;width:25.0px;height:23px;font-size:9.5px;color:#506c96">4</div>
<div class="a" style="left:649.5px;top:583px;width:1px;height:23px;background:#e6e6e6"></div>
<div class="cell" style="left:649.5px;top:583px;width:24.5px;height:23px;font-size:9.5px;color:#506c96">5</div>
<div class="a" style="left:674.0px;top:583px;width:1px;height:23px;background:#e6e6e6"></div>
<div class="cell" style="left:674.0px;top:583px;width:25.0px;height:23px;font-size:9.5px;color:#506c96">6</div>
<div class="a" style="left:699.0px;top:583px;width:1px;height:23px;background:#e6e6e6"></div>
<div class="cell" style="left:699.0px;top:583px;width:25.0px;height:23px;font-size:9.5px;color:#506c96">7</div>
<div class="a" style="left:724.0px;top:583px;width:1px;height:23px;background:#e6e6e6"></div>
<div class="cell" style="left:724.0px;top:583px;width:25.0px;height:23px;font-size:9.5px;color:#506c96">8</div>
<div class="a" style="left:749.0px;top:583px;width:1px;height:23px;background:#e6e6e6"></div>
<div class="cell" style="left:749.0px;top:583px;width:24.5px;height:23px;font-size:9.5px;color:#506c96">9</div>
<div class="a" style="left:773.5px;top:583px;width:1px;height:23px;background:#e6e6e6"></div>
<div class="cell" style="left:773.5px;top:583px;width:30.5px;height:23px;font-size:9.5px;color:#506c96">10</div>
<div class="a" style="left:804.0px;top:583px;width:1px;height:23px;background:#e6e6e6"></div>
<div class="cell" style="left:804.0px;top:583px;width:30.5px;height:23px;font-size:9.5px;color:#506c96">11</div>
<div class="a" style="left:834.5px;top:583px;width:1px;height:23px;background:#e6e6e6"></div>
<div class="cell" style="left:834.5px;top:583px;width:46.5px;height:23px;font-size:9.5px;color:#555">下一页</div>
</body></html>
